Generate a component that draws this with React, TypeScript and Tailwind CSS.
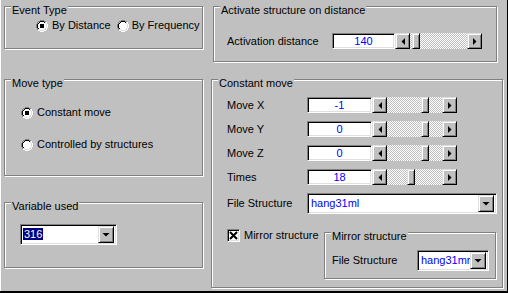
import type { ReactNode } from 'react'

const raised =
  'border border-t-[#dfdfdf] border-l-[#dfdfdf] border-r-black border-b-black shadow-[inset_1px_1px_0_#fff,inset_-1px_-1px_0_#808080] bg-[#c0c0c0]'
const sunken =
  'border border-t-[#808080] border-l-[#808080] border-r-white border-b-white shadow-[inset_1px_1px_0_#000,inset_-1px_-1px_0_#dfdfdf] bg-white'

function Frame({ title, className, children }: { title: string; className: string; children?: ReactNode }) {
  return (
    <div className={`flex flex-col border border-[#808080] shadow-[inset_1px_1px_0_#fff,1px_1px_0_#fff] ${className}`}>
      <div className="-mt-[3px] ml-[6px] w-fit bg-[#c0c0c0] px-[1px] leading-[13px]">{title}</div>
      {children}
    </div>
  )
}

function Radio({ on }: { on?: boolean }) {
  return (
    <svg width="12" height="12" viewBox="0 0 12 12" className="shrink-0" shapeRendering="crispEdges">
      <circle cx="6" cy="6" r="4.5" fill="#fff" />
      <path d="M9.89 2.11A5.5 5.5 0 0 0 2.11 9.89" fill="none" stroke="#808080" />
      <path d="M2.11 9.89A5.5 5.5 0 0 0 9.89 2.11" fill="none" stroke="#fff" />
      <path d="M9.18 2.82A4.5 4.5 0 0 0 2.82 9.18" fill="none" stroke="#000" />
      <path d="M2.82 9.18A4.5 4.5 0 0 0 9.18 2.82" fill="none" stroke="#dfdfdf" />
      {on && <rect x="4" y="4" width="4" height="4" fill="#000" />}
    </svg>
  )
}

function Arrow({ dir }: { dir: 'left' | 'right' | 'down' }) {
  const pts = dir === 'left' ? '6,1 6,8 2.5,4.5' : dir === 'right' ? '2,1 2,8 5.5,4.5' : '0.5,1 7.5,1 4,4.5'
  const size = dir === 'down' ? 'w-[8px] h-[5px]' : 'w-[8px] h-[9px]'
  return (
    <svg viewBox={dir === 'down' ? '0 0 8 5' : '0 0 8 9'} className={size}>
      <polygon points={pts} fill="#000" />
    </svg>
  )
}

function Slider({ thumb, track }: { thumb: string; track: string }) {
  return (
    <div className="flex h-[16px]">
      <div className={`${raised} flex w-[15px] items-center justify-center`}>
        <Arrow dir="left" />
      </div>
      <div className={`flex ${track} bg-[repeating-conic-gradient(#fff_0_25%,#c0c0c0_0_50%)] bg-[length:2px_2px]`}>
        <div className={`${raised} w-[8px] ${thumb}`} />
      </div>
      <div className={`${raised} flex w-[15px] items-center justify-center`}>
        <Arrow dir="right" />
      </div>
    </div>
  )
}

function Spin({ value, w, thumb, track }: { value: string; w: string; thumb: string; track: string }) {
  return (
    <div className="flex">
      <div className={`${sunken} ${w} h-[16px] text-center leading-[14px] text-[#0000ff]`}>{value}</div>
      <Slider thumb={thumb} track={track} />
    </div>
  )
}

function Combo({ w, children }: { w: string; children: ReactNode }) {
  return (
    <div className={`${sunken} ${w} flex h-[21px] items-center p-[2px]`}>
      <div className="flex-1 overflow-hidden whitespace-nowrap">{children}</div>
      <div className={`${raised} flex h-[17px] w-[16px] shrink-0 items-center justify-center`}>
        <Arrow dir="down" />
      </div>
    </div>
  )
}

export default function App() {
  return (
    <div className="flex h-[293px] w-[508px] overflow-hidden border-b-2 border-black bg-[#c0c0c0] font-['Liberation_Sans',Arial,sans-serif] text-[11px] text-black">
      {/* left column */}
      <div className="flex w-[210px] shrink-0 flex-col border-l border-white">
        <Frame title="Event Type" className="ml-[3px] mt-[6px] h-[43px] w-[199px]">
          <div className="ml-[31px] mt-[2px] flex items-center">
            <Radio on />
            <span className="ml-[4px] leading-[13px]">By Distance</span>
            <span className="ml-[6px]" />
            <Radio />
            <span className="ml-[3px] leading-[13px]">By Frequency</span>
          </div>
        </Frame>

        <Frame title="Move type" className="ml-[3px] mt-[30px] h-[97px] w-[199px]">
          <div className="ml-[16px] mt-[16px] flex items-center">
            <Radio on />
            <span className="ml-[4px] leading-[13px]">Constant move</span>
          </div>
          <div className="ml-[16px] mt-[19px] flex items-center">
            <Radio />
            <span className="ml-[4px] leading-[13px]">Controlled by structures</span>
          </div>
        </Frame>

        <Frame title="Variable used" className="ml-[3px] mt-[26px] h-[66px] w-[199px]">
          <div className="ml-[15px] mt-[11px]">
            <Combo w="w-[97px]">
              <span className="bg-[#000080] px-[1px] text-white">316</span>
            </Combo>
          </div>
        </Frame>
      </div>

      {/* right column */}
      <div className="flex flex-1 flex-col border-r border-black">
        <Frame title="Activate structure on distance" className="ml-[3px] mt-[6px] h-[56px] w-[284px]">
          <div className="ml-[13px] mt-[16px] flex items-center">
            <span className="w-[105px] leading-[13px]">Activation distance</span>
            <Spin value="140" w="w-[63px]" thumb="ml-[2px]" track="w-[57px]" />
          </div>
        </Frame>

        <Frame title="Constant move" className="ml-[1px] mt-[17px] h-[209px] w-[292px]">
          {[
            ['Move X', '-1', 'ml-[34px]'],
            ['Move Y', '0', 'ml-[34px]'],
            ['Move Z', '0', 'ml-[34px]'],
            ['Times', '18', 'ml-[20px]'],
          ].map(([label, value, thumb], i) => (
            <div key={label} className={`ml-[15px] flex items-center ${i === 0 ? 'mt-[7px]' : 'mt-[8px]'}`}>
              <span className="w-[80px] leading-[13px]">{label}</span>
              <Spin value={value} w="w-[65px]" thumb={thumb} track="w-[55px]" />
            </div>
          ))}

          <div className="ml-[15px] mt-[8px] flex items-center">
            <span className="w-[80px] leading-[13px]">File Structure</span>
            <Combo w="w-[190px]">
              <span className="pl-[1px] text-[#0000ff]">hang31ml</span>
            </Combo>
          </div>

          <div className="ml-[15px] mt-[15px] flex items-start">
            <div className="flex w-[97px] items-center">
              <div className={`${sunken} flex h-[13px] w-[13px] items-center justify-center`}>
                <svg width="9" height="9" viewBox="0 0 9 9">
                  <path d="M1 1L8 8M8 1L1 8" stroke="#000" strokeWidth="2" />
                </svg>
              </div>
              <span className="ml-[4px] leading-[13px]">Mirror structure</span>
            </div>
            <Frame title="Mirror structure" className="mt-[3px] h-[47px] w-[172px]">
              <div className="ml-[7px] mt-[7px] flex items-center">
                <span className="w-[85px] leading-[13px]">File Structure</span>
                <Combo w="w-[72px]">
                  <span className="pl-[1px] text-[#0000ff]">hang31mr</span>
                </Combo>
              </div>
            </Frame>
          </div>
        </Frame>
      </div>
    </div>
  )
}
